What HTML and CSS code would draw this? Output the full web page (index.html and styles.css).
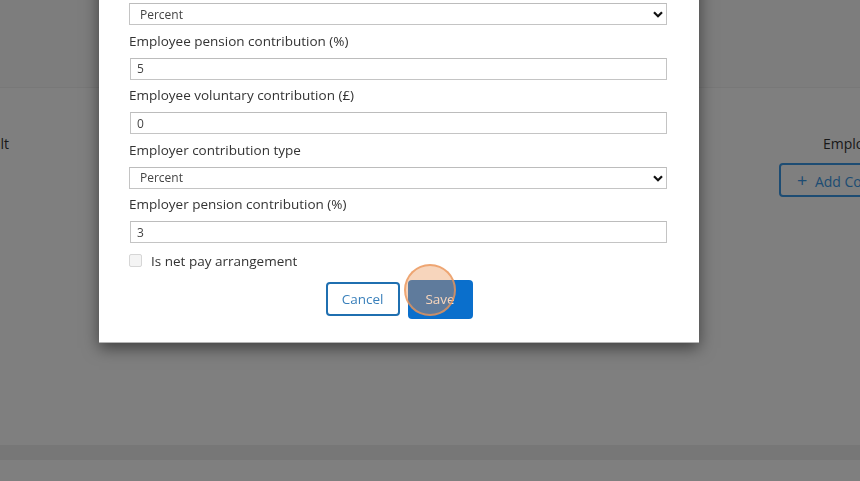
FILE: index.html
```html
<!DOCTYPE html>
<html lang="en">
<head>
<meta charset="utf-8">
<title>Pension</title>
<link rel="stylesheet" href="styles.css">
</head>
<body>
<div class="page">
  <header class="page-header"></header>
  <section class="table-head">
    <div class="cell cell-left"><span>Default</span></div>
    <div class="cell cell-mid"></div>
    <div class="cell cell-right">
      <div class="col-title">Employer contribution</div>
      <button class="add-btn" type="button"><span class="plus">+</span> Add Contribution</button>
    </div>
  </section>
  <div class="page-spacer"></div>
  <div class="page-band"></div>
</div>

<div class="overlay"></div>

<div class="modal">
  <form class="form">
    <div class="group">
      <label class="label">Employee contribution type</label>
      <div class="select-wrap">
        <select class="field select"><option>Percent</option></select>
        <svg class="chev" width="10" height="7" viewBox="0 0 10 7"><path d="M1 1.2 L5 5.2 L9 1.2" fill="none" stroke="#111" stroke-width="2.2"/></svg>
      </div>
    </div>
    <div class="group">
      <label class="label">Employee pension contribution (%)</label>
      <input class="field input" value="5">
    </div>
    <div class="group">
      <label class="label">Employee voluntary contribution (£)</label>
      <input class="field input" value="0">
    </div>
    <div class="group">
      <label class="label">Employer contribution type</label>
      <div class="select-wrap">
        <select class="field select"><option>Percent</option></select>
        <svg class="chev" width="10" height="7" viewBox="0 0 10 7"><path d="M1 1.2 L5 5.2 L9 1.2" fill="none" stroke="#111" stroke-width="2.2"/></svg>
      </div>
    </div>
    <div class="group">
      <label class="label">Employer pension contribution (%)</label>
      <input class="field input" value="3">
    </div>
    <div class="check-row">
      <span class="checkbox"></span>
      <span class="check-label">Is net pay arrangement</span>
    </div>
    <div class="actions">
      <button class="btn btn-cancel" type="button">Cancel</button>
      <button class="btn btn-save" type="button">Save</button>
    </div>
  </form>
  <div class="click-marker"></div>
</div>
</body>
</html>
```

FILE: styles.css
```css
* { box-sizing: border-box; }
html, body {
  margin: 0;
  padding: 0;
  width: 860px;
  height: 481px;
  overflow: hidden;
  font-family: "Open Sans", "Noto Sans", sans-serif;
  color: #333;
  background: #fff;
}
.page {
  display: flex;
  flex-direction: column;
  height: 481px;
  background: #fff;
}
.page-header {
  height: 88px;
  background: #fbfbfb;
  border-bottom: 1px solid #f0f0f0;
  flex: none;
}
.table-head {
  display: grid;
  grid-template-columns: 9px 770px 220px;
  padding-top: 46px;
}
.cell-left {
  display: flex;
  justify-content: flex-end;
  white-space: nowrap;
  font-size: 14px;
  color: #333;
  line-height: 20px;
}
.cell-right {
  display: flex;
  flex-direction: column;
  white-space: nowrap;
}
.col-title {
  font-size: 14px;
  line-height: 20px;
  padding-left: 44px;
  color: #333;
}
.add-btn {
  margin-top: 9px;
  height: 34px;
  width: 180px;
  border: 2px solid #3a98e6;
  border-radius: 4px;
  background: #fff;
  color: #3a98e6;
  font-family: "Open Sans", sans-serif;
  font-size: 14px;
  text-align: left;
  padding: 0 0 0 16px;
}
.add-btn .plus { font-size: 18px; margin-right: 4px; }
.page-spacer { flex: 1; }
.page-band {
  height: 15px;
  background: #eeeeee;
  margin-bottom: 21px;
  flex: none;
}
.overlay {
  position: fixed;
  inset: 0;
  background: rgba(0, 0, 0, 0.5);
}
.modal {
  position: absolute;
  left: 99px;
  top: -42px;
  width: 600px;
  background: #fff;
  padding: 18px 32px 23px 30px;
  box-shadow: 0 5px 15px rgba(0, 0, 0, 0.5);
  border-bottom: 1px solid #b5b5b5;
}
.form { display: flex; flex-direction: column; }
.group {
  display: flex;
  flex-direction: column;
  margin-bottom: 5.5px;
}
.label {
  font-size: 13.5px;
  line-height: 20px;
  margin-bottom: 7px;
  color: #333;
}
.select-wrap { position: relative; display: flex; }
.field {
  display: block;
  height: 22px;
  width: 538px;
  border: 1px solid #c4c4c4;
  border-top-color: #bcbcbc;
  background: #fff;
  font-family: "Open Sans", sans-serif;
  font-size: 12px;
  color: #444;
  margin: 0;
  outline: none;
}
.input { padding: 0 6px; margin-left: 1px; width: 537px; }
.select {
  appearance: none;
  -webkit-appearance: none;
  padding: 0 0 0 10px;
  border-radius: 0;
}
.chev {
  position: absolute;
  right: 4px;
  top: 8px;
}
.check-row {
  display: flex;
  align-items: center;
  gap: 9px;
  margin-top: 2px;
  height: 20px;
}
.checkbox {
  width: 13px;
  height: 13px;
  border: 1px solid #d6d6d6;
  border-radius: 2px;
  background: #f4f4f4;
}
.check-label { font-size: 13.5px; color: #333; }
.actions {
  display: flex;
  justify-content: center;
  align-items: center;
  gap: 8px;
  margin-top: 9px;
  padding-left: 2px;
}
.btn {
  font-family: "Open Sans", sans-serif;
  font-size: 13.5px;
  border-radius: 4px;
  cursor: pointer;
}
.btn-cancel {
  width: 74px;
  height: 34px;
  border: 2px solid #1f6fb0;
  background: #fff;
  color: #3a80bb;
}
.btn-save {
  width: 65px;
  height: 39px;
  border: none;
  background: #0a6fcc;
  color: #fff;
}
.click-marker {
  position: absolute;
  left: 305px;
  top: 306px;
  width: 52px;
  height: 52px;
  border-radius: 50%;
  background: rgba(235, 145, 80, 0.38);
  border: 2px solid rgba(235, 150, 90, 0.75);
}
```
